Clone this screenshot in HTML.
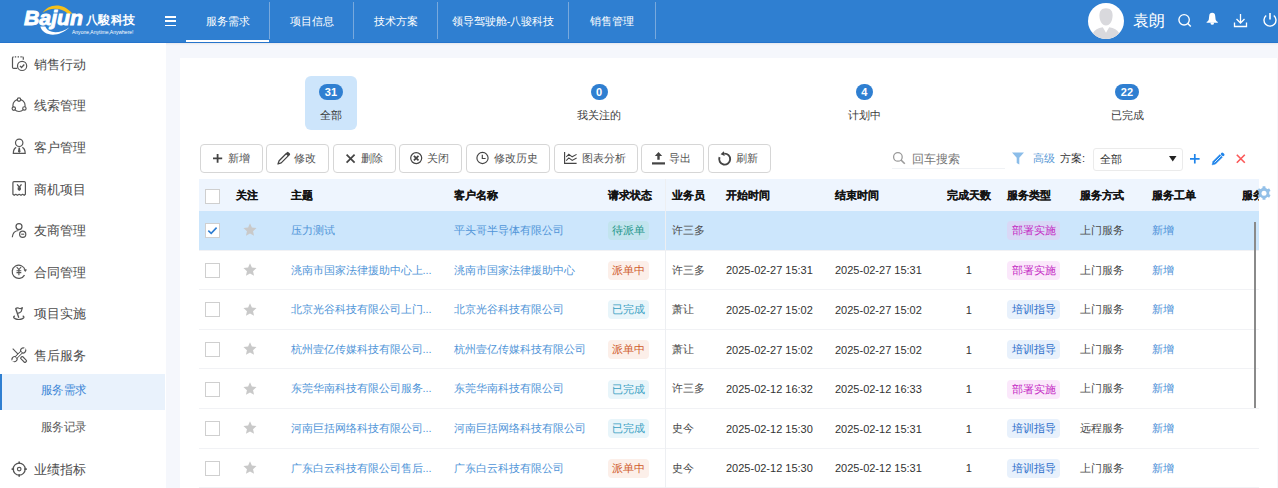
<!DOCTYPE html>
<html><head><meta charset="utf-8">
<style>
*{box-sizing:border-box;margin:0;padding:0}
html,body{width:1278px;height:488px;overflow:hidden;background:#f5f7fc;font-family:"Liberation Sans",sans-serif;}
.a{position:absolute;white-space:nowrap}
#hdr{position:absolute;left:0;top:0;width:1278px;height:43px;background:#2f7fd1;border-bottom:1px solid #2574cc;box-shadow:0 1px 2px rgba(0,0,0,0.07)}
.nav{position:absolute;top:0;height:42px;line-height:42px;color:#fff;font-size:11px;text-align:center}
.sep{position:absolute;top:2px;width:1px;height:37px;background:#78a9dd}
#side{position:absolute;left:0;top:43px;width:166px;height:445px;background:#fff}
.si{position:absolute;left:34px;font-size:13px;color:#4d4d4d;line-height:20px;height:20px}
.ss{position:absolute;left:41px;transform:scaleX(0.955);transform-origin:0 0;font-size:12px;color:#555;line-height:20px;height:20px}
.ic{position:absolute;left:10px}
#card{position:absolute;left:180px;top:58px;width:1097px;height:430px;background:#fff}
.btn{position:absolute;top:144px;height:29px;border:1px solid #d6d6d6;border-radius:4px;background:#fff;font-size:11px;color:#555;line-height:27px}
.th{position:absolute;white-space:nowrap;top:179.4px;-webkit-text-stroke:0.12px #111;height:32px;line-height:32px;font-size:11px;font-weight:bold;color:#1b1b1b}
.td{position:absolute;white-space:nowrap;font-size:11px;line-height:20px;height:20px;color:#4a4a4a}
.lk{color:#5095d8}
.tag{position:absolute;height:19px;line-height:19px;font-size:11px;text-align:center;border-radius:4px}
.cb{position:absolute;left:205px;width:15px;height:15px;border:1px solid #cfcfcf;background:#fff}
</style></head><body>

<div id="hdr">
<svg class="a" style="left:0;top:0" width="150" height="42" viewBox="0 0 150 42">
<path d="M42.8 12.8 C47 5 62 1 72.3 13.6 L68.2 13.9 C61 7.2 50 7.5 42.8 12.8 Z" fill="#f6c01a"/>
<path d="M40.3 26.6 C43 36.5 59 38 69.5 27.3 C60 34 48.5 34 45.3 26.6 Z" fill="#fff"/>
<text x="24" y="25.4" font-family="Liberation Sans" font-size="21" font-weight="bold" font-style="italic" fill="#fff" stroke="#fff" stroke-width="0.9" textLength="59" lengthAdjust="spacingAndGlyphs">Bajun</text>
<text x="72" y="33.8" font-family="Liberation Sans" font-size="5.8" fill="#fff" textLength="61.5" lengthAdjust="spacingAndGlyphs">Anyone,Anytime,Anywhere!</text>
</svg>
<div class="a" style="left:86px;top:13px;font-size:12px;line-height:14px;color:#fff;font-weight:bold;letter-spacing:0.4px">八駿科技</div>
<div class="a" style="left:165px;top:16px;width:11px;height:1.8px;background:#fff"></div>
<div class="a" style="left:165px;top:20.3px;width:11px;height:1.8px;background:#fff"></div>
<div class="a" style="left:165px;top:24.6px;width:11px;height:1.8px;background:#fff"></div>
<div class="nav" style="left:186px;width:83px">服务需求</div>
<div class="sep" style="left:269px"></div>
<div class="nav" style="left:270px;width:83px">项目信息</div>
<div class="sep" style="left:353px"></div>
<div class="nav" style="left:354px;width:83px">技术方案</div>
<div class="sep" style="left:437px"></div>
<div class="nav" style="left:438px;width:130px">领导驾驶舱-八骏科技</div>
<div class="sep" style="left:568px"></div>
<div class="nav" style="left:569px;width:86px">销售管理</div>
<div class="sep" style="left:655px"></div>
<div class="a" style="left:186px;top:40px;width:83px;height:2px;background:#fff"></div>
<svg class="a" style="left:1087px;top:2px" width="38" height="38" viewBox="0 0 38 38">
<circle cx="19" cy="19" r="18" fill="#fff"/>
<path d="M19 6.2 C23.5 6.2 25.6 9 25.6 13.5 C25.6 18.5 23 23.6 19 23.6 C15 23.6 12.4 18.5 12.4 13.5 C12.4 9 14.5 6.2 19 6.2 Z" fill="#d9d9dd"/>
<path d="M5.8 31.2 Q8.5 26.3 15.8 25.3 L19 30.8 L22.2 25.3 Q29.5 26.3 32.2 31.2 Q27 36.8 19 37 Q11 36.8 5.8 31.2 Z" fill="#d9d9dd"/>
</svg>
<div class="a" style="left:1133px;top:11px;font-size:16px;line-height:20px;color:#fff">袁朗</div>
<svg class="a" style="left:1176px;top:12px" width="18" height="18" viewBox="0 0 18 18">
<circle cx="8.1" cy="7.8" r="5.2" fill="none" stroke="#fff" stroke-width="1.35"/>
<line x1="11.8" y1="11.5" x2="14.8" y2="14.5" stroke="#fff" stroke-width="1.5"/>
</svg>
<svg class="a" style="left:1204px;top:11px" width="16" height="18" viewBox="0 0 16 18">
<path d="M8.2 1.8 Q11 1.8 11.2 5 L11.6 8.5 Q12 10 13.8 11 L13.8 11.8 L2.6 11.8 L2.6 11 Q4.4 10 4.8 8.5 L5.2 5 Q5.4 1.8 8.2 1.8 Z" fill="#fff"/>
<path d="M6.6 11.5 H9.9 V12.8 Q9.9 13.8 8.25 13.8 Q6.6 13.8 6.6 12.8 Z" fill="#fff"/>
</svg>
<svg class="a" style="left:1232px;top:12px" width="18" height="18" viewBox="0 0 18 18">
<line x1="8.5" y1="2" x2="8.5" y2="10" stroke="#fff" stroke-width="1.3"/>
<path d="M4.5 7 L8.5 11 L12.5 7" fill="none" stroke="#fff" stroke-width="1.3"/>
<path d="M2.5 10.5 L2.5 14.5 L14.5 14.5 L14.5 10.5" fill="none" stroke="#fff" stroke-width="1.3"/>
</svg>
<svg class="a" style="left:1261px;top:11px" width="18" height="18" viewBox="0 0 18 18">
<path d="M5.2 4.5 A6 6 0 1 0 12.8 4.5" fill="none" stroke="#fff" stroke-width="1.4"/>
<line x1="9" y1="2" x2="9" y2="8.5" stroke="#fff" stroke-width="1.6"/>
</svg>
</div>
<div id="side"></div>
<div class="si" style="top:54.7px">销售行动</div>
<div class="si" style="top:96.3px">线索管理</div>
<div class="si" style="top:137.9px">客户管理</div>
<div class="si" style="top:179.5px">商机项目</div>
<div class="si" style="top:221.1px">友商管理</div>
<div class="si" style="top:262.7px">合同管理</div>
<div class="si" style="top:304.3px">项目实施</div>
<div class="si" style="top:345.9px">售后服务</div>
<div class="si" style="top:459.5px">业绩指标</div>
<div class="a" style="left:0;top:374px;width:165px;height:36px;background:#e9f2fc"></div>
<div class="a" style="left:0;top:374px;width:2px;height:36px;background:#2f7fd1"></div>
<div class="ss" style="top:380px;color:#3b86d6">服务需求</div>
<div class="ss" style="top:416.7px">服务记录</div>
<svg class="a" style="left:0;top:0" width="40" height="488" viewBox="0 0 40 488">
<path d="M17.2 68.4 L13.6 68.4 Q12.5 68.4 12.5 67.3 L12.5 58 Q12.5 56.9 13.6 56.9" stroke="#555" stroke-width="1.2" fill="none"/><path d="M14.8 56.9 h1.4 M17.6 56.9 h1.4 M20.4 56.9 h1.4 M22.4 56.9 Q23.3 56.9 23.3 57.8 L23.3 59.8" stroke="#555" stroke-width="1.2" fill="none"/><circle cx="22.1" cy="65.9" r="4.6" stroke="#555" stroke-width="1.2" fill="#fff"/><path d="M20 65.9 L21.5 67.5 L24.3 64.5" stroke="#555" stroke-width="1.25" fill="none"/>
<circle cx="19" cy="105.4" r="6.1" stroke="#555" stroke-width="1.15" fill="none"/><circle cx="19" cy="99.6" r="1.7" stroke="#555" stroke-width="1.15" fill="#fff"/><circle cx="13.8" cy="108.6" r="1.7" stroke="#555" stroke-width="1.15" fill="#fff"/><circle cx="24.4" cy="108.4" r="1.7" stroke="#555" stroke-width="1.15" fill="#fff"/>
<circle cx="19.2" cy="142.8" r="3.7" stroke="#555" stroke-width="1.2" fill="none"/><path d="M16.2 147.4 Q13.4 148.6 13.3 153.4 H25.2 Q25.1 148.6 22.3 147.4" stroke="#555" stroke-width="1.2" fill="none"/><path d="M18.6 147.6 L19.9 147.6 L20.5 151.6 L19.25 152.9 L18 151.6 Z" fill="#555"/>
<path d="M12.9 194.3 L12.9 182.7 Q12.9 181.6 14 181.6 L24.3 181.6 Q25.4 181.6 25.4 182.7 L25.4 194.3 L24.2 195.3 L22.6 194.3 L21 195.3 L19.2 194.3 L17.4 195.3 L15.8 194.3 L14.2 195.3 Z" stroke="#555" stroke-width="1.2" fill="none" stroke-linejoin="round"/><path d="M17.1 184.3 L19.3 187.2 L21.5 184.3" stroke="#555" stroke-width="1.3" fill="none"/><path d="M17.6 187.6 Q19.3 186.6 21 187.6 L20.9 189.8 L19.3 191 L17.7 189.8 Z" fill="#555"/>
<circle cx="19" cy="226.6" r="3" stroke="#555" stroke-width="1.2" fill="none"/><path d="M12.3 237.2 Q12.8 231 18.5 230.5" stroke="#555" stroke-width="1.2" fill="none"/><circle cx="22.7" cy="234.2" r="3.1" stroke="#555" stroke-width="1.2" fill="#fff"/><path d="M21.2 234.2 H24.2" stroke="#555" stroke-width="1.1"/>
<path d="M25.18 270.09 A6.6 6.6 0 1 0 24.52 275.1" stroke="#555" stroke-width="1.2" fill="none"/><path d="M23.5 269.4 L27.1 269.4 L25.3 272.1 Z" fill="#555"/><path d="M16.7 267 L18.9 269.6 L21.1 267 M18.9 269.6 V275.2 M16.5 270.7 H21.3 M16.5 272.6 H21.3" stroke="#555" stroke-width="1.1" fill="none"/>
<path d="M18.8 317.8 L15.6 308.3" stroke="#555" stroke-width="1.3" fill="none"/><path d="M15.6 308.5 Q17.5 307.3 19 308.3 Q20.8 309.3 22.5 307.4 L21.3 311.3 Q19.8 313 17.4 313.4" stroke="#555" stroke-width="1.2" fill="none"/><path d="M14.8 315.9 Q13.3 316.6 13.7 317.7 Q14.8 319.4 18.8 319.5 Q22.8 319.4 23.9 317.7 Q24.2 316.6 22.7 315.9" stroke="#555" stroke-width="1.2" fill="none"/>
<path d="M12.7 348.7 L19.3 355.3" stroke="#555" stroke-width="1.1"/><rect x="-3.3" y="-1.4" width="6.6" height="2.8" rx="0.8" transform="translate(23.6 359.5) rotate(45)" stroke="#555" stroke-width="1.1" fill="#fff"/><g transform="translate(18.85 354.8) rotate(-45)"><rect x="-4" y="-1.1" width="8" height="2.2" stroke="#555" stroke-width="1" fill="#fff"/><circle cx="6.1" cy="0" r="2.5" stroke="#555" stroke-width="1.1" fill="#fff"/><circle cx="-6.1" cy="0" r="2.5" stroke="#555" stroke-width="1.1" fill="#fff"/><rect x="6.6" y="-0.9" width="2.6" height="1.8" fill="#fff"/><rect x="-9.2" y="-0.9" width="2.6" height="1.8" fill="#fff"/><rect x="-3.6" y="-0.55" width="7.2" height="1.1" fill="#fff"/></g>
<circle cx="19.2" cy="469.1" r="6" stroke="#555" stroke-width="1.3" fill="none"/><circle cx="19.2" cy="469.1" r="1.8" stroke="#555" stroke-width="1.2" fill="none"/><path d="M19.2 461.5 V464 M19.2 474.2 V476.7 M11.6 469.1 H14.1 M24.3 469.1 H26.8" stroke="#555" stroke-width="1.6"/>
</svg>
<div id="card"></div>
<div class="a" style="left:305px;top:76px;width:52px;height:54px;border-radius:6px;background:#cde5fb"></div>
<div class="a" style="left:319.2px;top:83.5px;width:23.5px;height:16.5px;border-radius:9px;background:#2f7fd1;color:#fff;font-size:11px;font-weight:bold;text-align:center;line-height:16.5px">31</div>
<div class="a" style="left:281.0px;top:104.5px;width:100px;text-align:center;font-size:11px;line-height:20px;color:#3a3a3a">全部</div>
<div class="a" style="left:590.5px;top:83.5px;width:17.0px;height:16.5px;border-radius:9px;background:#2f7fd1;color:#fff;font-size:11px;font-weight:bold;text-align:center;line-height:16.5px">0</div>
<div class="a" style="left:549.0px;top:104.5px;width:100px;text-align:center;font-size:11px;line-height:20px;color:#3a3a3a">我关注的</div>
<div class="a" style="left:855.7px;top:83.5px;width:17.0px;height:16.5px;border-radius:9px;background:#2f7fd1;color:#fff;font-size:11px;font-weight:bold;text-align:center;line-height:16.5px">4</div>
<div class="a" style="left:814.2px;top:104.5px;width:100px;text-align:center;font-size:11px;line-height:20px;color:#3a3a3a">计划中</div>
<div class="a" style="left:1115.2px;top:83.5px;width:23.5px;height:16.5px;border-radius:9px;background:#2f7fd1;color:#fff;font-size:11px;font-weight:bold;text-align:center;line-height:16.5px">22</div>
<div class="a" style="left:1077.0px;top:104.5px;width:100px;text-align:center;font-size:11px;line-height:20px;color:#3a3a3a">已完成</div>
<div class="btn" style="left:200px;width:63px"></div>
<svg class="a" style="left:212.6px;top:153.7px;overflow:visible" width="10" height="10" viewBox="0 0 10 10"><path d="M4.6 0 V8.8 M0 4.4 H9.2" stroke="#444" stroke-width="1.8"/></svg>
<div class="a" style="left:228px;top:148px;font-size:11px;line-height:20px;color:#555">新增</div>
<div class="btn" style="left:266px;width:63px"></div>
<svg class="a" style="left:277.0px;top:152.2px;overflow:visible" width="13" height="13" viewBox="0 0 13 13"><g transform="rotate(-45 6.5 6.5)"><path d="M-1.3 6.5 L1.8 5 L12 5 L12 8 L1.8 8 Z" fill="none" stroke="#444" stroke-width="1.25" stroke-linejoin="round"/><path d="M-1.3 6.5 L0.4 5.6 L0.4 7.4 Z" fill="#444"/><rect x="11.5" y="4.5" width="3" height="4" rx="1" fill="#444"/></g></svg>
<div class="a" style="left:294px;top:148px;font-size:11px;line-height:20px;color:#555">修改</div>
<div class="btn" style="left:333px;width:63px"></div>
<svg class="a" style="left:345.6px;top:153.6px;overflow:visible" width="10" height="10" viewBox="0 0 10 10"><path d="M0.6 0.6 L8.6 8.6 M8.6 0.6 L0.6 8.6" stroke="#444" stroke-width="1.7"/></svg>
<div class="a" style="left:361px;top:148px;font-size:11px;line-height:20px;color:#555">删除</div>
<div class="btn" style="left:399px;width:63px"></div>
<svg class="a" style="left:410.0px;top:152.0px;overflow:visible" width="13" height="13" viewBox="0 0 13 13"><circle cx="6.2" cy="6.1" r="5.5" stroke="#444" stroke-width="1.2" fill="none"/><path d="M3.9 3.8 L8.5 8.4 M8.5 3.8 L3.9 8.4" stroke="#444" stroke-width="1.7"/></svg>
<div class="a" style="left:427px;top:148px;font-size:11px;line-height:20px;color:#555">关闭</div>
<div class="btn" style="left:466px;width:84px"></div>
<svg class="a" style="left:476.0px;top:152.0px;overflow:visible" width="13" height="13" viewBox="0 0 13 13"><circle cx="6.5" cy="6" r="5.6" stroke="#444" stroke-width="1.15" fill="none"/><path d="M6.3 2.8 V6.5 H9.6" stroke="#444" stroke-width="1.15" fill="none"/></svg>
<div class="a" style="left:494px;top:148px;font-size:11px;line-height:20px;color:#555">修改历史</div>
<div class="btn" style="left:554px;width:84px"></div>
<svg class="a" style="left:564.2px;top:152.0px;overflow:visible" width="14" height="13" viewBox="0 0 14 13"><path d="M0.6 0 V11.4 H12.6" stroke="#444" stroke-width="1.15" fill="none"/><path d="M2.2 5 L4.8 2.3 L8.2 4.8 L12.6 2.4 M2.2 8.6 L4.8 5.9 L8.2 8.4 L12.6 6" stroke="#444" stroke-width="1.05" fill="none"/></svg>
<div class="a" style="left:582px;top:148px;font-size:11px;line-height:20px;color:#555">图表分析</div>
<div class="btn" style="left:641px;width:63px"></div>
<svg class="a" style="left:652.0px;top:151.7px;overflow:visible" width="13" height="13" viewBox="0 0 13 13"><path d="M6.5 0 L10.2 3.9 L7.7 3.9 L7.7 7.8 L5.3 7.8 L5.3 3.9 L2.8 3.9 Z" fill="#444"/><rect x="0" y="10.3" width="13" height="2.2" fill="#444"/></svg>
<div class="a" style="left:669px;top:148px;font-size:11px;line-height:20px;color:#555">导出</div>
<div class="btn" style="left:708px;width:63px"></div>
<svg class="a" style="left:718.0px;top:152.0px;overflow:visible" width="14" height="14" viewBox="0 0 14 14"><path d="M6.2 1.6 A5.5 5.5 0 1 1 1.53 5.12" stroke="#444" stroke-width="1.9" fill="none"/><path d="M6.7 4.0 L5.8 -0.8 L2.6 2.3 Z" fill="#444"/></svg>
<div class="a" style="left:736px;top:148px;font-size:11px;line-height:20px;color:#555">刷新</div>
<svg class="a" style="left:892px;top:151px" width="15" height="15" viewBox="0 0 15 15">
<circle cx="5.9" cy="5.9" r="4.3" stroke="#999" stroke-width="1.25" fill="none"/><path d="M9 9 L12.8 12.8" stroke="#999" stroke-width="1.6"/></svg>
<div class="a" style="left:912px;top:149px;font-size:12px;line-height:20px;color:#777">回车搜索</div>
<div class="a" style="left:892px;top:168px;width:113px;height:1px;background:#f0f2f5"></div>
<svg class="a" style="left:1012px;top:152px" width="12" height="13" viewBox="0 0 12 13">
<path d="M0 0.5 H12 L7.3 5.8 V12.5 L4.7 11 V5.8 Z" fill="#8bbde9"/></svg>
<div class="a" style="left:1033px;top:148px;font-size:11px;line-height:20px;color:#5a9ad6">高级</div>
<div class="a" style="left:1060px;top:148px;font-size:11px;line-height:20px;color:#333">方案:</div>
<div class="a" style="left:1093px;top:148px;width:90px;height:23px;border:1px solid #ebebeb;border-radius:3px;background:#fff"></div>
<div class="a" style="left:1100px;top:149px;font-size:11px;line-height:20px;color:#333">全部</div>
<svg class="a" style="left:1169px;top:156px" width="8" height="6" viewBox="0 0 8 6"><path d="M0 0 H7.5 L3.75 5.5 Z" fill="#222"/></svg>
<svg class="a" style="left:1190px;top:153.5px" width="11" height="11" viewBox="0 0 11 11"><path d="M4.8 0 V9.6 M0 4.8 H9.6" stroke="#1f84ea" stroke-width="1.7"/></svg>
<svg class="a" style="left:1211px;top:152px;overflow:visible" width="14" height="14" viewBox="0 0 14 14"><g transform="rotate(-45 7 7)"><path d="M-1.3 7 L1.6 5.2 L11.4 5.2 L11.4 8.8 L1.6 8.8 Z" fill="#1f84ea" stroke="#1f84ea" stroke-width="0.5" stroke-linejoin="round"/><path d="M2 7 H11" stroke="#fff" stroke-width="0.8"/><rect x="12.2" y="5" width="2.8" height="4" rx="1.4" fill="#1f84ea"/></g></svg>
<svg class="a" style="left:1235.5px;top:154.3px" width="10" height="10" viewBox="0 0 10 10"><path d="M0.8 0.8 L8.8 8.8 M8.8 0.8 L0.8 8.8" stroke="#fb5757" stroke-width="1.6"/></svg>
<div class="a" style="left:199px;top:179px;width:1060px;height:32px;background:#eef5fe"></div>
<div class="cb" style="top:189px"></div>
<div class="th" style="left:236.0px">关注</div>
<div class="th" style="left:290.5px">主题</div>
<div class="th" style="left:453.7px">客户名称</div>
<div class="th" style="left:608.0px">请求状态</div>
<div class="th" style="left:672.0px">业务员</div>
<div class="th" style="left:726.0px">开始时间</div>
<div class="th" style="left:835.0px">结束时间</div>
<div class="th" style="left:947.4px">完成天数</div>
<div class="th" style="left:1007.3px">服务类型</div>
<div class="th" style="left:1080.0px">服务方式</div>
<div class="th" style="left:1152.0px">服务工单</div>
<div class="th" style="left:1241.7px;width:17px;overflow:hidden">服务</div>
<svg class="a" style="left:1256px;top:185px" width="16" height="16" viewBox="0 0 16 16">
<g fill="#93c0e8"><circle cx="8" cy="8" r="5.3"/>
<rect x="6.5" y="1.2" width="3" height="3" rx="0.6"/>
<rect x="6.5" y="1.2" width="3" height="3" rx="0.6" transform="rotate(60 8 8)"/>
<rect x="6.5" y="1.2" width="3" height="3" rx="0.6" transform="rotate(120 8 8)"/>
<rect x="6.5" y="1.2" width="3" height="3" rx="0.6" transform="rotate(180 8 8)"/>
<rect x="6.5" y="1.2" width="3" height="3" rx="0.6" transform="rotate(240 8 8)"/>
<rect x="6.5" y="1.2" width="3" height="3" rx="0.6" transform="rotate(300 8 8)"/>
</g><circle cx="8" cy="8.2" r="2.5" fill="#fff"/></svg>
<div class="a" style="left:199px;top:210.9px;width:1060px;height:38.9px;background:#cce6fc"></div>
<div class="a" style="left:199px;top:249.5px;width:1060px;height:1px;background:#f1f2f5"></div>
<div class="cb" style="top:223.2px"></div>
<svg class="a" style="left:205px;top:223.2px" width="15" height="15" viewBox="0 0 15 15"><path d="M3.3 7.6 L6.2 10.3 L11.6 4.6" stroke="#2d7dd2" stroke-width="1.6" fill="none"/></svg>
<svg class="a" style="left:243.2px;top:223.3px" width="14" height="14" viewBox="0 0 14 14"><path d="M7.00 0.30 L8.88 4.61 L13.56 5.07 L10.04 8.19 L11.06 12.78 L7.00 10.40 L2.94 12.78 L3.96 8.19 L0.44 5.07 L5.12 4.61 Z" fill="#c9c9c9"/></svg>
<div class="td lk" style="left:290.5px;top:220.0px">压力测试</div>
<div class="td lk" style="left:453.7px;top:220.0px">平头哥半导体有限公司</div>
<div class="tag" style="left:608px;top:221.2px;width:41px;background:#c2e4ee;color:#24968a">待派单</div>
<div class="td" style="left:672px;top:220.0px">许三多</div>
<div class="tag" style="left:1007px;top:221.2px;width:53px;background:#d9d8f6;color:#c42ac4">部署实施</div>
<div class="td" style="left:1080px;top:220.0px">上门服务</div>
<div class="td lk" style="left:1152px;top:220.0px;color:#4b90d8">新增</div>
<div class="a" style="left:199px;top:289.1px;width:1060px;height:1px;background:#f1f2f5"></div>
<div class="cb" style="top:262.8px"></div>
<svg class="a" style="left:243.2px;top:262.9px" width="14" height="14" viewBox="0 0 14 14"><path d="M7.00 0.30 L8.88 4.61 L13.56 5.07 L10.04 8.19 L11.06 12.78 L7.00 10.40 L2.94 12.78 L3.96 8.19 L0.44 5.07 L5.12 4.61 Z" fill="#c9c9c9"/></svg>
<div class="td lk" style="left:290.5px;top:259.6px">洮南市国家法律援助中心上...</div>
<div class="td lk" style="left:453.7px;top:259.6px">洮南市国家法律援助中心</div>
<div class="tag" style="left:608px;top:260.8px;width:41px;background:#fcefe9;color:#cf5a2a">派单中</div>
<div class="td" style="left:672px;top:259.6px">许三多</div>
<div class="td" style="left:726px;top:260.3px;color:#333">2025-02-27 15:31</div>
<div class="td" style="left:835px;top:260.3px;color:#333">2025-02-27 15:31</div>
<div class="td" style="left:948.7px;top:260.3px;width:40px;text-align:center;color:#333">1</div>
<div class="tag" style="left:1007px;top:260.8px;width:53px;background:#fbe8fb;color:#c42ac4">部署实施</div>
<div class="td" style="left:1080px;top:259.6px">上门服务</div>
<div class="td lk" style="left:1152px;top:259.6px;color:#4b90d8">新增</div>
<div class="a" style="left:199px;top:328.7px;width:1060px;height:1px;background:#f1f2f5"></div>
<div class="cb" style="top:302.4px"></div>
<svg class="a" style="left:243.2px;top:302.5px" width="14" height="14" viewBox="0 0 14 14"><path d="M7.00 0.30 L8.88 4.61 L13.56 5.07 L10.04 8.19 L11.06 12.78 L7.00 10.40 L2.94 12.78 L3.96 8.19 L0.44 5.07 L5.12 4.61 Z" fill="#c9c9c9"/></svg>
<div class="td lk" style="left:290.5px;top:299.2px">北京光谷科技有限公司上门...</div>
<div class="td lk" style="left:453.7px;top:299.2px">北京光谷科技有限公司</div>
<div class="tag" style="left:608px;top:300.4px;width:41px;background:#e8f5fa;color:#3a9fc3">已完成</div>
<div class="td" style="left:672px;top:299.2px">萧让</div>
<div class="td" style="left:726px;top:299.9px;color:#333">2025-02-27 15:02</div>
<div class="td" style="left:835px;top:299.9px;color:#333">2025-02-27 15:02</div>
<div class="td" style="left:948.7px;top:299.9px;width:40px;text-align:center;color:#333">1</div>
<div class="tag" style="left:1007px;top:300.4px;width:53px;background:#e8f1fc;color:#2a6dca">培训指导</div>
<div class="td" style="left:1080px;top:299.2px">上门服务</div>
<div class="td lk" style="left:1152px;top:299.2px;color:#4b90d8">新增</div>
<div class="a" style="left:199px;top:368.3px;width:1060px;height:1px;background:#f1f2f5"></div>
<div class="cb" style="top:342.0px"></div>
<svg class="a" style="left:243.2px;top:342.1px" width="14" height="14" viewBox="0 0 14 14"><path d="M7.00 0.30 L8.88 4.61 L13.56 5.07 L10.04 8.19 L11.06 12.78 L7.00 10.40 L2.94 12.78 L3.96 8.19 L0.44 5.07 L5.12 4.61 Z" fill="#c9c9c9"/></svg>
<div class="td lk" style="left:290.5px;top:338.8px">杭州壹亿传媒科技有限公司...</div>
<div class="td lk" style="left:453.7px;top:338.8px">杭州壹亿传媒科技有限公司</div>
<div class="tag" style="left:608px;top:340.0px;width:41px;background:#fcefe9;color:#cf5a2a">派单中</div>
<div class="td" style="left:672px;top:338.8px">萧让</div>
<div class="td" style="left:726px;top:339.5px;color:#333">2025-02-27 15:02</div>
<div class="td" style="left:835px;top:339.5px;color:#333">2025-02-27 15:02</div>
<div class="td" style="left:948.7px;top:339.5px;width:40px;text-align:center;color:#333">1</div>
<div class="tag" style="left:1007px;top:340.0px;width:53px;background:#e8f1fc;color:#2a6dca">培训指导</div>
<div class="td" style="left:1080px;top:338.8px">上门服务</div>
<div class="td lk" style="left:1152px;top:338.8px;color:#4b90d8">新增</div>
<div class="a" style="left:199px;top:407.9px;width:1060px;height:1px;background:#f1f2f5"></div>
<div class="cb" style="top:381.6px"></div>
<svg class="a" style="left:243.2px;top:381.7px" width="14" height="14" viewBox="0 0 14 14"><path d="M7.00 0.30 L8.88 4.61 L13.56 5.07 L10.04 8.19 L11.06 12.78 L7.00 10.40 L2.94 12.78 L3.96 8.19 L0.44 5.07 L5.12 4.61 Z" fill="#c9c9c9"/></svg>
<div class="td lk" style="left:290.5px;top:378.4px">东莞华南科技有限公司服务...</div>
<div class="td lk" style="left:453.7px;top:378.4px">东莞华南科技有限公司</div>
<div class="tag" style="left:608px;top:379.6px;width:41px;background:#e8f5fa;color:#3a9fc3">已完成</div>
<div class="td" style="left:672px;top:378.4px">许三多</div>
<div class="td" style="left:726px;top:379.1px;color:#333">2025-02-12 16:32</div>
<div class="td" style="left:835px;top:379.1px;color:#333">2025-02-12 16:33</div>
<div class="td" style="left:948.7px;top:379.1px;width:40px;text-align:center;color:#333">1</div>
<div class="tag" style="left:1007px;top:379.6px;width:53px;background:#fbe8fb;color:#c42ac4">部署实施</div>
<div class="td" style="left:1080px;top:378.4px">上门服务</div>
<div class="td lk" style="left:1152px;top:378.4px;color:#4b90d8">新增</div>
<div class="a" style="left:199px;top:447.5px;width:1060px;height:1px;background:#f1f2f5"></div>
<div class="cb" style="top:421.2px"></div>
<svg class="a" style="left:243.2px;top:421.3px" width="14" height="14" viewBox="0 0 14 14"><path d="M7.00 0.30 L8.88 4.61 L13.56 5.07 L10.04 8.19 L11.06 12.78 L7.00 10.40 L2.94 12.78 L3.96 8.19 L0.44 5.07 L5.12 4.61 Z" fill="#c9c9c9"/></svg>
<div class="td lk" style="left:290.5px;top:418.0px">河南巨括网络科技有限公司...</div>
<div class="td lk" style="left:453.7px;top:418.0px">河南巨括网络科技有限公司</div>
<div class="tag" style="left:608px;top:419.2px;width:41px;background:#e8f5fa;color:#3a9fc3">已完成</div>
<div class="td" style="left:672px;top:418.0px">史今</div>
<div class="td" style="left:726px;top:418.7px;color:#333">2025-02-12 15:30</div>
<div class="td" style="left:835px;top:418.7px;color:#333">2025-02-12 15:31</div>
<div class="td" style="left:948.7px;top:418.7px;width:40px;text-align:center;color:#333">1</div>
<div class="tag" style="left:1007px;top:419.2px;width:53px;background:#e8f1fc;color:#2a6dca">培训指导</div>
<div class="td" style="left:1080px;top:418.0px">远程服务</div>
<div class="td lk" style="left:1152px;top:418.0px;color:#4b90d8">新增</div>
<div class="a" style="left:199px;top:487.1px;width:1060px;height:1px;background:#f1f2f5"></div>
<div class="cb" style="top:460.8px"></div>
<svg class="a" style="left:243.2px;top:460.9px" width="14" height="14" viewBox="0 0 14 14"><path d="M7.00 0.30 L8.88 4.61 L13.56 5.07 L10.04 8.19 L11.06 12.78 L7.00 10.40 L2.94 12.78 L3.96 8.19 L0.44 5.07 L5.12 4.61 Z" fill="#c9c9c9"/></svg>
<div class="td lk" style="left:290.5px;top:457.6px">广东白云科技有限公司售后...</div>
<div class="td lk" style="left:453.7px;top:457.6px">广东白云科技有限公司</div>
<div class="tag" style="left:608px;top:458.8px;width:41px;background:#fcefe9;color:#cf5a2a">派单中</div>
<div class="td" style="left:672px;top:457.6px">史今</div>
<div class="td" style="left:726px;top:458.3px;color:#333">2025-02-12 15:30</div>
<div class="td" style="left:835px;top:458.3px;color:#333">2025-02-12 15:31</div>
<div class="td" style="left:948.7px;top:458.3px;width:40px;text-align:center;color:#333">1</div>
<div class="tag" style="left:1007px;top:458.8px;width:53px;background:#e8f1fc;color:#2a6dca">培训指导</div>
<div class="td" style="left:1080px;top:457.6px">上门服务</div>
<div class="td lk" style="left:1152px;top:457.6px;color:#4b90d8">新增</div>
<div class="a" style="left:665px;top:179px;width:1px;height:309px;background:#edeff2"></div>
<div class="a" style="left:1254.3px;top:221.5px;width:1.8px;height:186px;background:#8a8a8a"></div>
</body></html>
